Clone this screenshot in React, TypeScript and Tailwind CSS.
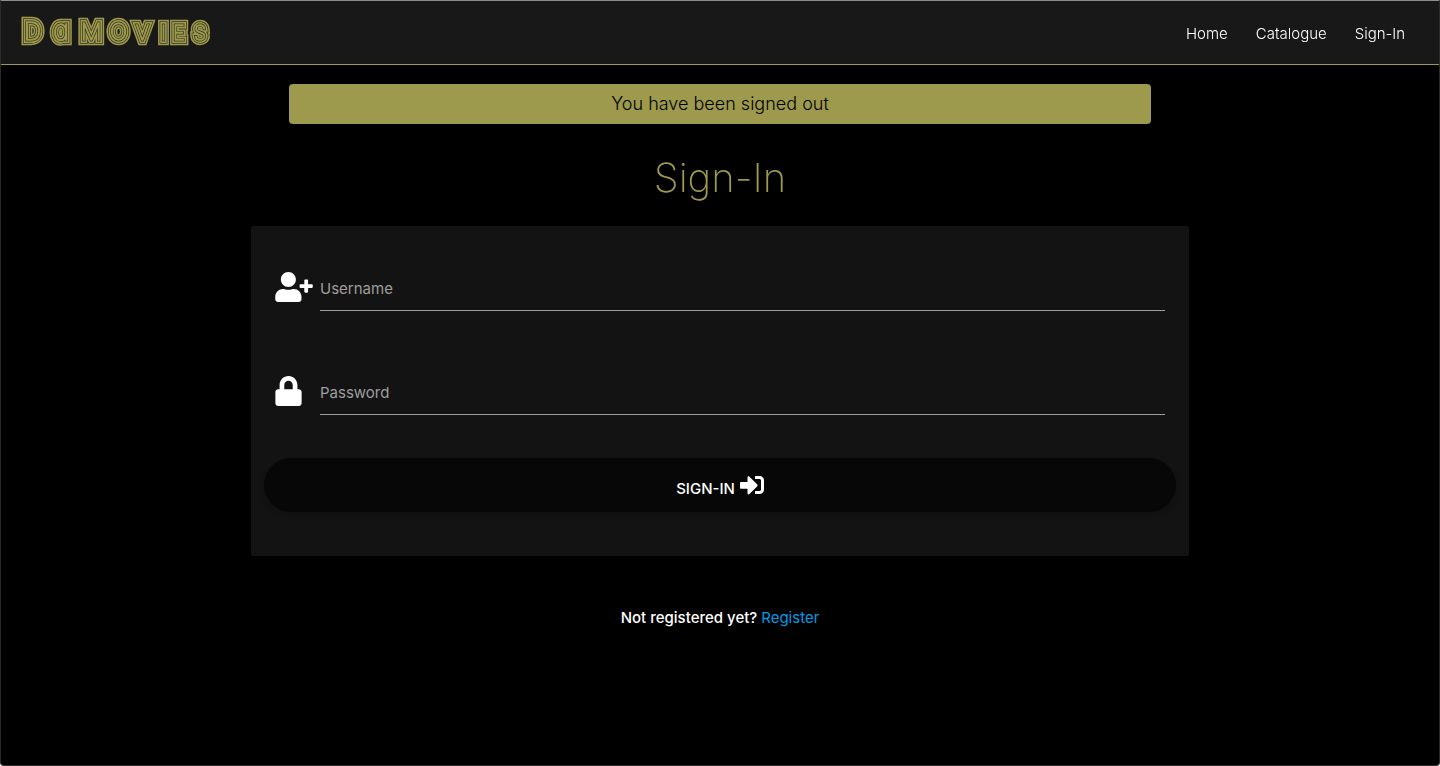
import { FaLock, FaSignInAlt, FaUserPlus } from "react-icons/fa";

const letters = [
  { ch: "D", x: 3, size: 24 },
  { ch: "a", x: 32, size: 28 },
  { ch: "M", x: 60, size: 23 },
  { ch: "O", x: 89, size: 23 },
  { ch: "V", x: 115, size: 20 },
  { ch: "I", x: 140, size: 20 },
  { ch: "E", x: 152, size: 20 },
  { ch: "S", x: 173, size: 20 },
];

const rings = [
  { width: 10.4, color: "#9e9a4d" },
  { width: 7.4, color: "#343220" },
  { width: 6, color: "#9e9a4d" },
  { width: 2.8, color: "#343220" },
  { width: 1.4, color: "#9e9a4d" },
];

function Logo() {
  return (
    <svg className="h-12 w-48 will-change-transform" viewBox="0 0 192 48" role="img" aria-label="Da Movies">
      <g className="font-[Inter] font-thin [font-feature-settings:'cv11']" fill="#9e9a4d" strokeMiterlimit={2}>
        {rings.map((r) =>
          letters.map((l) => (
            <text key={l.ch + r.width} x={l.x} y={31} fontSize={l.size} stroke={r.color} strokeWidth={r.width}>
              {l.ch}
            </text>
          )),
        )}
      </g>
    </svg>
  );
}

const fieldClass =
  "h-[41px] min-w-0 flex-1 border-b border-[#9e9e9e] bg-transparent pb-1 text-[15px] outline-none placeholder:text-[#9e9e9e]";

export default function App() {
  return (
    <div className="min-h-screen rounded-b border border-t-[#8c8c8c] border-x-[#2b2b2b] border-b-[#2b2b2b] bg-black font-[Inter,sans-serif] text-white">
      <header className="flex h-16 items-center justify-between border-b border-[#9e9a4d] bg-[#181818] px-5">
        <a href="#home" className="block"><Logo /></a>
        <nav className="flex pt-1 text-[15px] font-light will-change-transform">
          <a href="#home" className="px-[14px]">Home</a>
          <a href="#catalogue" className="px-[14px]">Catalogue</a>
          <a href="#sign-in" className="px-[14px]">Sign-In</a>
        </nav>
      </header>
      <main>
        <p className="mx-auto mt-[19px] flex h-10 w-3/5 items-center justify-center rounded bg-[#9e9a4d] text-lg font-light text-black">
          You have been signed out
        </p>
        <h1 className="mt-7 text-center text-[40px] leading-[52px] font-extralight text-[#9e9a4d] will-change-transform">Sign-In</h1>
        <form className="mx-auto mt-[22px] w-[938px] max-w-full rounded-xs bg-[#131313] px-[13px] pt-8 pb-11">
          <div className="flex px-[11px] pt-3">
            <label htmlFor="username" className="w-[45px] shrink-0 pt-[2px]">
              <FaUserPlus className="h-[30px] w-[38px]" aria-label="Username" />
            </label>
            <input id="username" type="text" placeholder="Username" className={fieldClass} />
          </div>
          <div className="flex px-[11px] pt-[63px]">
            <label htmlFor="password" className="w-[45px] shrink-0 pt-[2px]">
              <FaLock className="h-[30px] w-[27px]" aria-label="Password" />
            </label>
            <input id="password" type="password" placeholder="Password" className={fieldClass} />
          </div>
          <button type="submit" className="mt-[43px] flex h-[54px] w-full items-center justify-center gap-[5px] rounded-full bg-[#070707] text-[15px] font-medium shadow-md">
            <span className="pt-2">SIGN-IN</span>
            <FaSignInAlt className="size-6" aria-hidden="true" />
          </button>
        </form>
        <p className="mt-[50px] text-center text-[15px] leading-6 font-medium">
          Not registered yet? <a href="#register" className="font-normal text-[#039be5]">Register</a>
        </p>
      </main>
    </div>
  );
}
